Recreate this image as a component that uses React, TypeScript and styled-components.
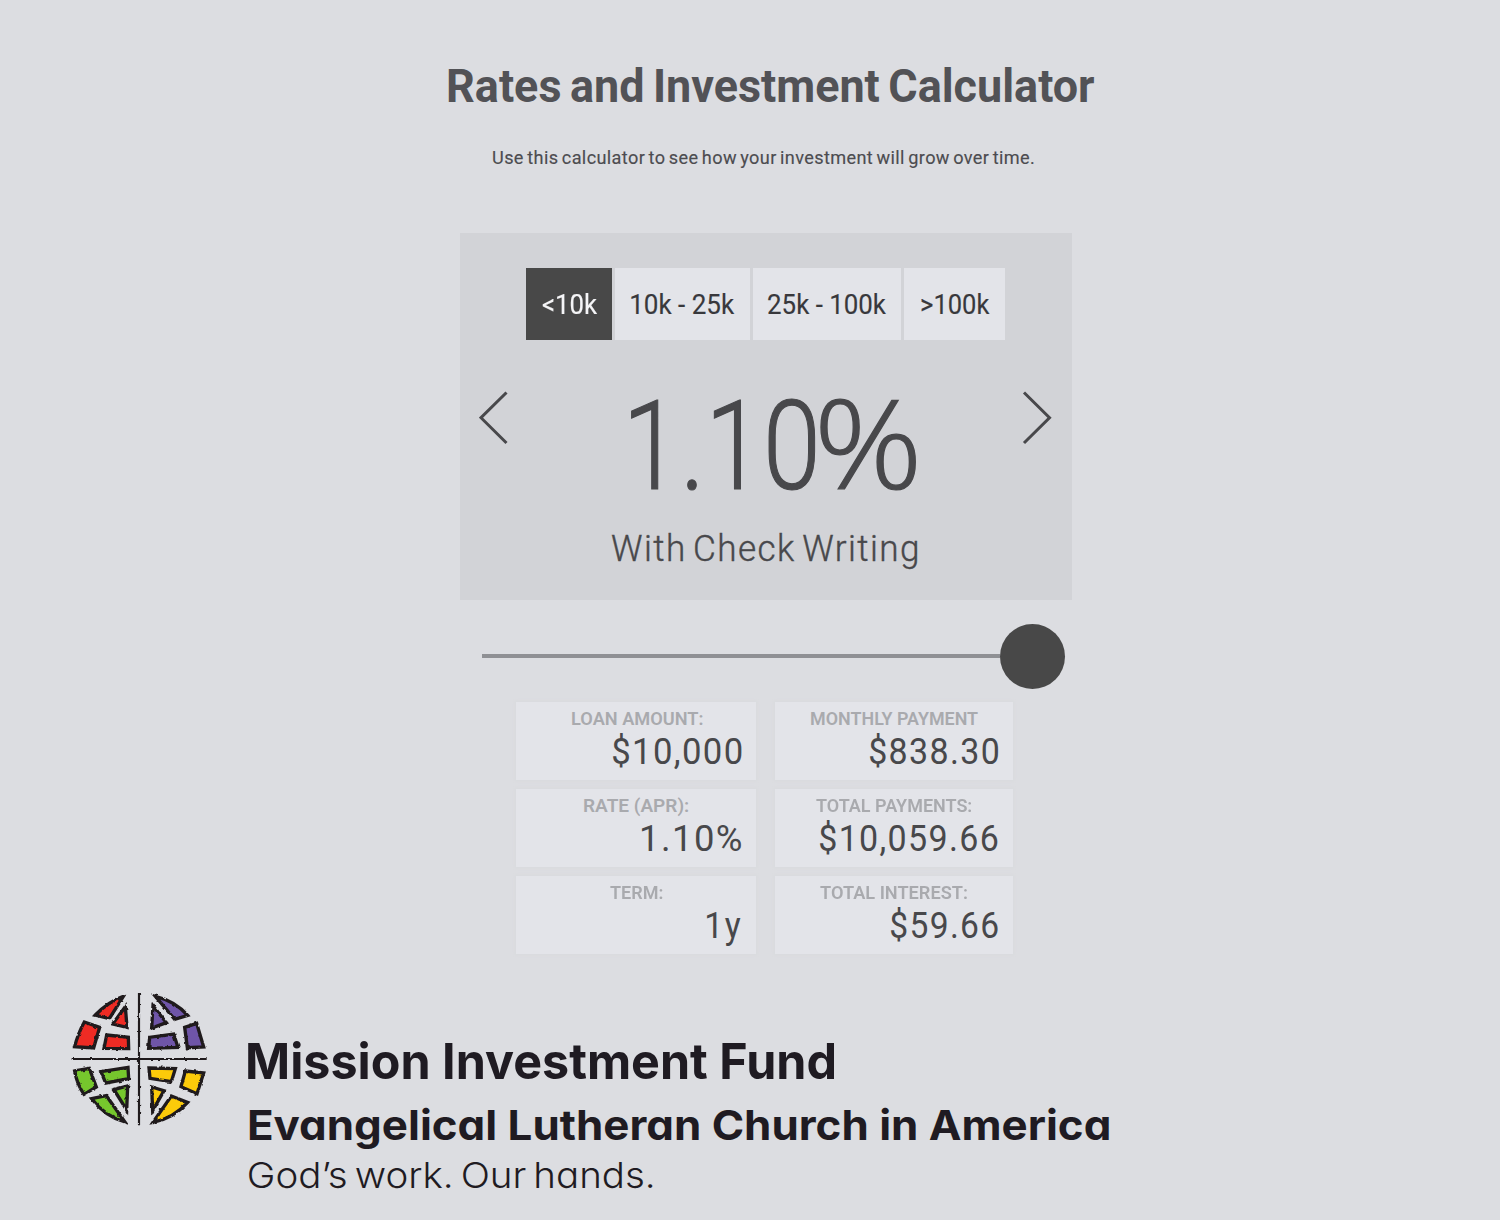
import { useLayoutEffect, useRef, useState } from "react";
import type { ReactNode } from "react";
import styled, { createGlobalStyle } from "styled-components";

const tabs = [
  { label: "<10k", box: 86, text: 56, active: true },
  { label: "10k - 25k", box: 135, text: 104 },
  { label: "25k - 100k", box: 148, text: 119 },
  { label: ">100k", box: 101, text: 69 },
];

const results = [
  { label: "LOAN AMOUNT:", labelWidth: 130, indent: 56, value: "$10,000", valueWidth: 128 },
  { label: "MONTHLY PAYMENT", labelWidth: 167, indent: 36, value: "$838.30", valueWidth: 128 },
  { label: "RATE (APR):", labelWidth: 104, indent: 68, value: "1.10%", valueWidth: 99 },
  { label: "TOTAL PAYMENTS:", labelWidth: 155, indent: 41, value: "$10,059.66", valueWidth: 178 },
  { label: "TERM:", labelWidth: 52, indent: 94, value: "1y", valueWidth: 34 },
  { label: "TOTAL INTEREST:", labelWidth: 147, indent: 45, value: "$59.66", valueWidth: 107 },
];

const globePieces = [
  { color: "#ee2b24", d: "M106 90 Q145 50 190 34 L148 101 Z" },
  { color: "#ee2b24", d: "M196 65 L201 127 L158 117 Z" },
  { color: "#ee2b24", d: "M73 111 L119 127 L101 189 L44 185 Q54 145 73 111 Z" },
  { color: "#ee2b24", d: "M140 150 L205 157 L206 191 L132 190 Z" },
  { color: "#6f55a8", d: "M286 34 Q345 48 383 91 L344 103 Z" },
  { color: "#6f55a8", d: "M279 62 L319 113 L275 129 Z" },
  { color: "#6f55a8", d: "M374 127 L410 115 L431 186 L382 188 Z" },
  { color: "#6f55a8", d: "M269 157 L341 147 L354 187 L266 190 Z" },
  { color: "#76c72d", d: "M44 258 L88 250 L109 306 L72 328 Q51 298 44 258 Z" },
  { color: "#76c72d", d: "M123 260 L204 247 L206 281 L137 294 Z" },
  { color: "#76c72d", d: "M162 314 L203 303 L200 375 Z" },
  { color: "#76c72d", d: "M95 341 L139 332 L195 411 Q135 394 95 341 Z" },
  { color: "#fccb0a", d: "M267 249 L346 251 L334 290 L270 280 Z" },
  { color: "#fccb0a", d: "M275 306 L312 317 L278 377 Z" },
  { color: "#fccb0a", d: "M376 258 L431 264 L411 326 L363 305 Z" },
  { color: "#fccb0a", d: "M334 333 L383 352 Q340 400 279 412 Z" },
];

interface FitTextProps {
  width: number;
  children: ReactNode;
}

// Stretches or narrows one line of text so its ink fills the given width
function FitText({ width, children }: FitTextProps) {
  const ref = useRef<HTMLSpanElement>(null);
  const [transform, setTransform] = useState("none");

  useLayoutEffect(() => {
    const el = ref.current;
    const ctx = document.createElement("canvas").getContext("2d");
    if (!el || !ctx) return;

    const style = getComputedStyle(el);
    ctx.font = `${style.fontWeight} ${style.fontSize} ${style.fontFamily}`;
    const metrics = ctx.measureText(el.textContent || "");
    const left = -metrics.actualBoundingBoxLeft;
    const right = metrics.width - metrics.actualBoundingBoxRight;
    const spacing = parseFloat(style.letterSpacing) || 0;
    const scale = width / (el.offsetWidth - left - right - spacing);
    setTransform(`translateX(${-left * scale}px) scaleX(${scale})`);
  }, [width]);

  return (
    <FitBox $width={width}>
      <FitInner ref={ref} style={{ transform }}>
        {children}
      </FitInner>
    </FitBox>
  );
}

function GlobeLogo() {
  return (
    <Globe viewBox="0 0 480 450" aria-hidden="true">
      <filter id="rough" x="0" y="0" width="100%" height="100%" colorInterpolationFilters="sRGB">
        <feTurbulence type="fractalNoise" baseFrequency="0.09" numOctaves="1" seed="4" result="noise" />
        <feDisplacementMap in="SourceGraphic" in2="noise" scale="9" xChannelSelector="R" yChannelSelector="G" />
      </filter>
      <g filter="url(#rough)" stroke="#1f1a1c" strokeWidth="10">
        {globePieces.map((piece) => (
          <path key={piece.d} d={piece.d} fill={piece.color} />
        ))}
        <path d="M237 24 V421 M35 222 H440" strokeWidth="6.5" fill="none" />
      </g>
    </Globe>
  );
}

export default function App() {
  return (
    <Page>
      <GlobalStyle />
      <Calculator>
        <Title>
          <FitText width={646}>Rates and Investment Calculator</FitText>
        </Title>
        <Subtitle>
          <FitText width={541}>Use this calculator to see how your investment will grow over time.</FitText>
        </Subtitle>

        <RatePanel>
          <TabList>
            {tabs.map((tab) => (
              <Tab key={tab.label} $width={tab.box} $active={tab.active}>
                <FitText width={tab.text}>{tab.label}</FitText>
              </Tab>
            ))}
          </TabList>
          <RateRow>
            <ArrowButton aria-label="Previous rate">
              <Chevron viewBox="0 0 30 54">
                <path d="M27.5 1.5 L2 26.7 L27.5 52" />
              </Chevron>
            </ArrowButton>
            <Rate>
              <FitText width={184}>1.10</FitText>
              <Percent>
                <FitText width={96}>%</FitText>
              </Percent>
            </Rate>
            <ArrowButton aria-label="Next rate">
              <Chevron viewBox="0 0 30 54">
                <path d="M2 1.5 L27.5 26.7 L2 52" />
              </Chevron>
            </ArrowButton>
          </RateRow>
          <RateName>
            <FitText width={305}>With Check Writing</FitText>
          </RateName>
        </RatePanel>

        <Slider>
          <Track />
          <Knob />
        </Slider>

        <Results>
          {results.map((item) => (
            <ResultCard key={item.label}>
              <ResultLabel $indent={item.indent}>
                <FitText width={item.labelWidth}>{item.label}</FitText>
              </ResultLabel>
              <ResultValue>
                <FitText width={item.valueWidth}>{item.value}</FitText>
              </ResultValue>
            </ResultCard>
          ))}
        </Results>
      </Calculator>

      <Footer>
        <GlobeLogo />
        <Brand>
          <FundName>
            <FitText width={587}>Mission Investment Fund</FitText>
          </FundName>
          <ChurchName>
            <FitText width={860}>Evangelical Lutheran Church in America</FitText>
          </ChurchName>
          <Tagline>
            <FitText width={403}>God’s work. Our hands.</FitText>
          </Tagline>
        </Brand>
      </Footer>
    </Page>
  );
}

const GlobalStyle = createGlobalStyle`
  body {
    margin: 0;
    background: #dcdde1;
  }

  * {
    box-sizing: border-box;
  }
`;

const Page = styled.main`
  display: flex;
  flex-direction: column;
  width: 1500px;
  height: 1220px;
  overflow: hidden;
  background: #dcdde1;
  color: #48484b;
  font-family: Roboto, "Liberation Sans", sans-serif;
`;

const FitBox = styled.span<{ $width: number }>`
  display: block;
  flex: none;
  width: ${({ $width }) => $width}px;
`;

const FitInner = styled.span`
  display: inline-block;
  white-space: nowrap;
  transform-origin: left center;
`;

const Calculator = styled.section`
  width: 612px;
  height: 985px;
  margin-left: 460px;
  padding-top: 62px;
`;

const Title = styled.h1`
  height: 47px;
  margin: 0 0 40px -12px;
  color: #525256;
  font-size: 47px;
  font-weight: 700;
  line-height: 47px;
  word-spacing: -0.06em;
`;

const Subtitle = styled.p`
  height: 19px;
  margin: 0 0 65px 33px;
  color: #4c4c50;
  font-size: 18.7px;
  font-weight: 400;
  line-height: 19px;
  letter-spacing: 0.02em;
  word-spacing: -0.08em;
  -webkit-text-stroke: 0.15px;
`;

const RatePanel = styled.div`
  height: 367px;
  padding-top: 35px;
  background: #d2d3d7;
`;

const TabList = styled.div`
  display: flex;
  gap: 3px;
  height: 72px;
  margin-left: 66px;
`;

const Tab = styled.button<{ $width: number; $active?: boolean }>`
  display: flex;
  align-items: center;
  justify-content: center;
  width: ${({ $width }) => $width}px;
  padding: 2px 0 0 1px;
  border: 0;
  background: ${({ $active }) => ($active ? "#484848" : "#e3e4e9")};
  color: ${({ $active }) => ($active ? "#f5f5f7" : "#38383c")};
  font-family: inherit;
  font-size: 28px;
  font-weight: 400;
  line-height: 28px;
  -webkit-text-stroke: 0.15px;
`;

const RateRow = styled.div`
  display: flex;
  justify-content: space-between;
  height: 125px;
  margin-top: 44px;
  padding: 7px 20px 0 19px;
`;

const ArrowButton = styled.button`
  width: 30px;
  height: 54px;
  padding: 0;
  border: 0;
  background: none;
`;

const Chevron = styled.svg`
  display: block;
  width: 30px;
  height: 54px;
  fill: none;
  stroke: #48484b;
  stroke-width: 3;
`;

const Rate = styled.div`
  display: flex;
  gap: 5px;
  margin: -7px 0 0 16px;
  font-size: 124px;
  font-weight: 300;
  line-height: 125px;
  -webkit-text-stroke: 1.2px;
`;

// Open Sans has the tall percent sign with a steep slash
const Percent = styled.span`
  margin-top: -6px;
  font-family: "Open Sans", sans-serif;
  font-size: 124px;
`;

const RateName = styled.div`
  margin: 20px 0 0 152px;
  font-size: 37.5px;
  font-weight: 300;
  line-height: 38px;
  letter-spacing: 0.04em;
  word-spacing: -0.1em;
  -webkit-text-stroke: 0.4px;
`;

const Slider = styled.div`
  display: flex;
  align-items: center;
  height: 65px;
  margin: 24px 7px 13px 22px;
`;

const Track = styled.div`
  flex: 1;
  height: 4px;
  margin-bottom: 1px;
  background: #8f9094;
`;

const Knob = styled.div`
  width: 65px;
  height: 65px;
  border-radius: 50%;
  background: #484848;
`;

const Results = styled.div`
  display: grid;
  grid-template-columns: 240px 238px;
  grid-auto-rows: 78px;
  gap: 9px 19px;
  margin-left: 56px;
`;

const ResultCard = styled.div`
  display: flex;
  flex-direction: column;
  padding: 7px 14px 0 0;
  background: #e3e4e9;
  box-shadow: 0 0 3px 1px #d9dadd;
`;

const ResultLabel = styled.div<{ $indent: number }>`
  height: 19px;
  margin-left: ${({ $indent }) => $indent}px;
  color: #a9aaae;
  font-size: 19px;
  font-weight: 600;
  line-height: 19px;
`;

const ResultValue = styled.div`
  align-self: flex-end;
  margin: 4px 1px 0 0;
  font-size: 37.5px;
  font-weight: 400;
  line-height: 38px;
  letter-spacing: 0.04em;
`;

const Footer = styled.footer`
  display: flex;
  padding-left: 60px;
  color: #1f1b22;
  font-family: Inter, Lato, sans-serif;
  font-feature-settings: "cv11" 1;
`;

const Globe = styled.svg`
  flex: none;
  width: 160px;
  height: 150px;
`;

const Brand = styled.div`
  margin-left: 29px;
  padding-top: 51px;
`;

const FundName = styled.div`
  margin-left: -1px;
  font-size: 49.5px;
  font-weight: 700;
  line-height: 50px;
`;

const ChurchName = styled.div`
  margin-top: 18px;
  font-size: 41.5px;
  font-weight: 700;
  line-height: 42px;
`;

const Tagline = styled.div`
  margin-top: 11px;
  font-size: 36px;
  font-weight: 300;
  line-height: 36px;
  word-spacing: -0.1em;
`;
